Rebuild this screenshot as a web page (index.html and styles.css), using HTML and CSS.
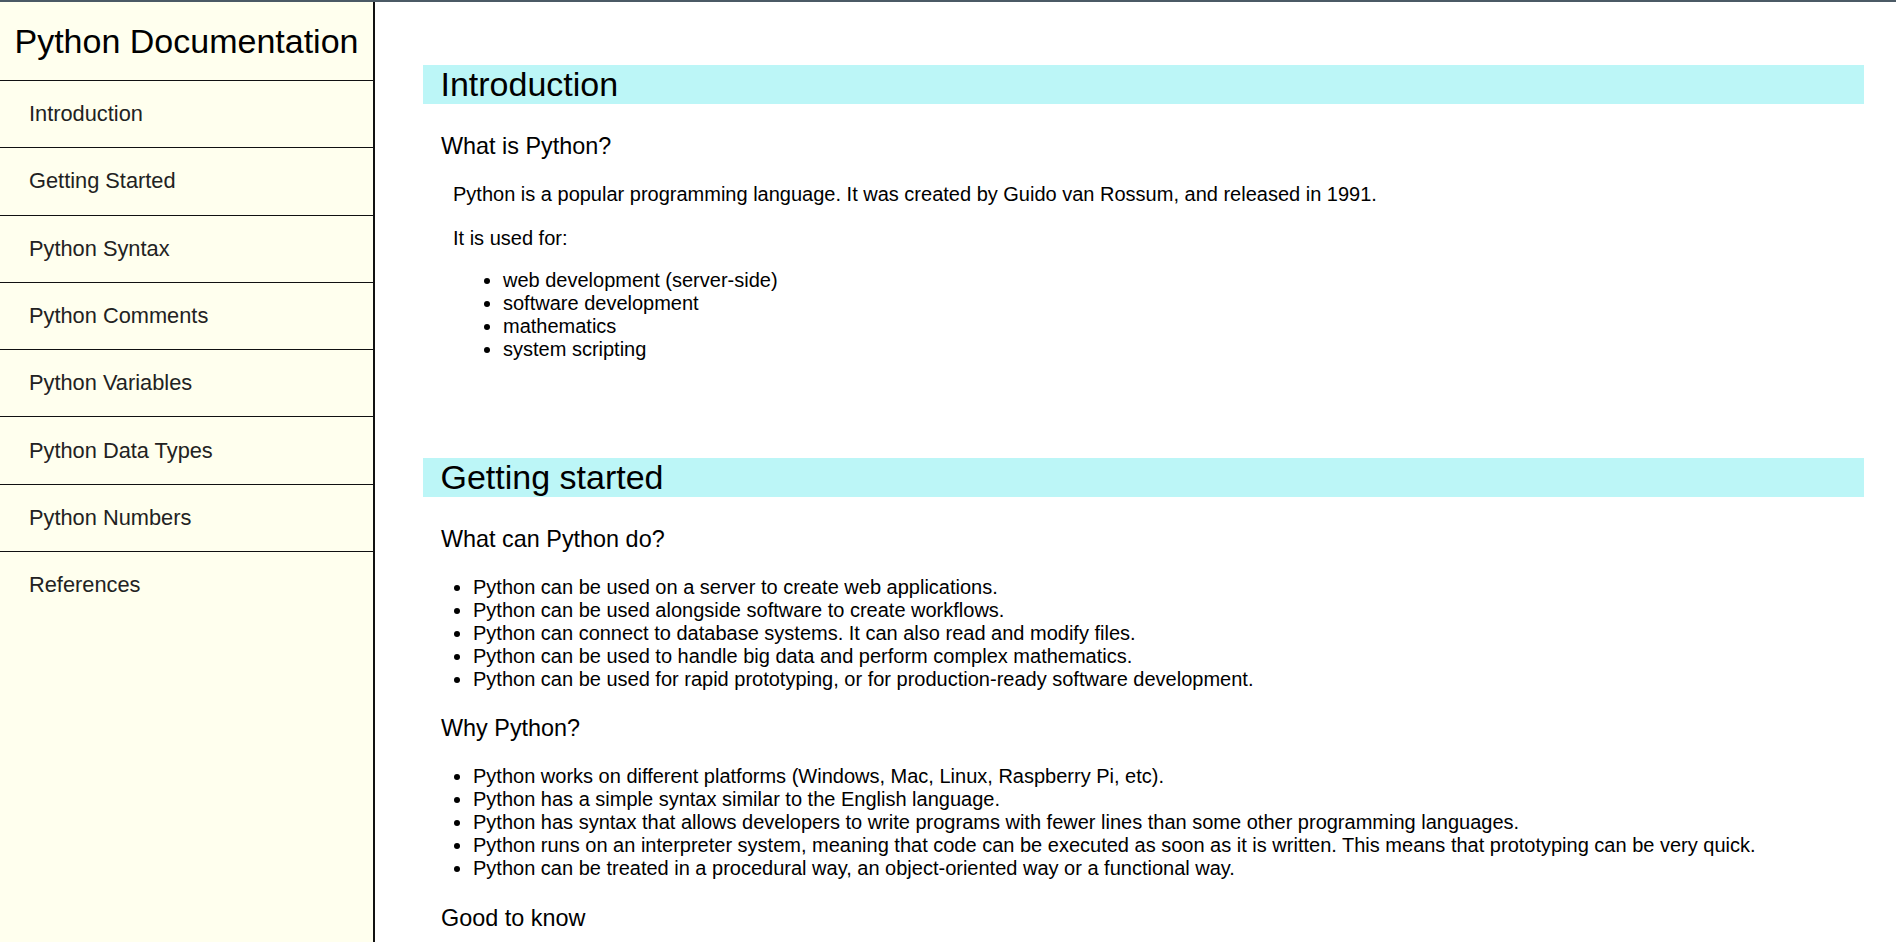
FILE: index.html
```html
<!DOCTYPE html>
<html lang="en">
<head>
<meta charset="utf-8">
<title>Python Documentation</title>
<link rel="stylesheet" href="styles.css">
</head>
<body>
<div class="page">
  <nav class="sidebar" id="navbar">
    <header class="sidebar-title">Python Documentation</header>
    <a class="nav-link" href="#Introduction">Introduction</a>
    <a class="nav-link" href="#Getting_Started">Getting Started</a>
    <a class="nav-link" href="#Python_Syntax">Python Syntax</a>
    <a class="nav-link" href="#Python_Comments">Python Comments</a>
    <a class="nav-link" href="#Python_Variables">Python Variables</a>
    <a class="nav-link" href="#Python_Data_Types">Python Data Types</a>
    <a class="nav-link" href="#Python_Numbers">Python Numbers</a>
    <a class="nav-link last" href="#References">References</a>
  </nav>
  <main class="main" id="main-doc">
    <section class="section" id="Introduction">
      <header class="section-title">Introduction</header>
      <h3 class="sub">What is Python?</h3>
      <div class="indent">
        <p class="para">Python is a popular programming language. It was created by Guido van Rossum, and released in 1991.</p>
        <p class="para">It is used for:</p>
        <ul class="list">
          <li>web development (server-side)</li>
          <li>software development</li>
          <li>mathematics</li>
          <li>system scripting</li>
        </ul>
      </div>
    </section>
    <section class="section" id="Getting_Started">
      <header class="section-title">Getting started</header>
      <h3 class="sub">What can Python do?</h3>
      <ul class="list">
        <li>Python can be used on a server to create web applications.</li>
        <li>Python can be used alongside software to create workflows.</li>
        <li>Python can connect to database systems. It can also read and modify files.</li>
        <li>Python can be used to handle big data and perform complex mathematics.</li>
        <li>Python can be used for rapid prototyping, or for production-ready software development.</li>
      </ul>
      <h3 class="sub">Why Python?</h3>
      <ul class="list">
        <li>Python works on different platforms (Windows, Mac, Linux, Raspberry Pi, etc).</li>
        <li>Python has a simple syntax similar to the English language.</li>
        <li>Python has syntax that allows developers to write programs with fewer lines than some other programming languages.</li>
        <li>Python runs on an interpreter system, meaning that code can be executed as soon as it is written. This means that prototyping can be very quick.</li>
        <li>Python can be treated in a procedural way, an object-oriented way or a functional way.</li>
      </ul>
      <h3 class="sub">Good to know</h3>
    </section>
  </main>
</div>
</body>
</html>
```
FILE: styles.css
```css
html, body {
  margin: 0;
  padding: 0;
  height: 100%;
}

body {
  font-family: "Liberation Sans", Arial, sans-serif;
  color: #000;
  background: #fff;
  border-top: 2px solid #4b5a65;
  box-sizing: border-box;
  overflow: hidden;
}

.page {
  display: flex;
  height: 940px;
}

.sidebar {
  flex: 0 0 373px;
  display: flex;
  flex-direction: column;
  background: #ffffee;
  border-right: 2px solid #111;
}

.sidebar-title {
  height: 78px;
  display: flex;
  align-items: center;
  justify-content: center;
  font-size: 34px;
  border-bottom: 1px solid #111;
}

.nav-link {
  display: flex;
  align-items: center;
  height: 66.3px;
  padding: 0 29px;
  font-size: 21.8px;
  color: #222;
  text-decoration: none;
  border-bottom: 1px solid #111;
}

.nav-link.last {
  border-bottom: none;
}

.main {
  flex: 1;
  padding: 63px 32px 0 48px;
  overflow: hidden;
}

.section {
  margin-bottom: 97.6px;
}

.section-title {
  background: #bcf6f7;
  font-size: 34px;
  line-height: 39px;
  padding: 0 15px 0 17.5px;
  margin-bottom: 28.8px;
}

.sub {
  font-size: 23.4px;
  font-weight: normal;
  margin: 24.2px 0 23px 18px;
}

.indent {
  margin-left: 30px;
}

.para {
  font-size: 20px;
  margin: 21.2px 0 0;
}

.list {
  font-size: 20px;
  margin: 18.8px 0 20px;
  padding-left: 50px;
}
```
